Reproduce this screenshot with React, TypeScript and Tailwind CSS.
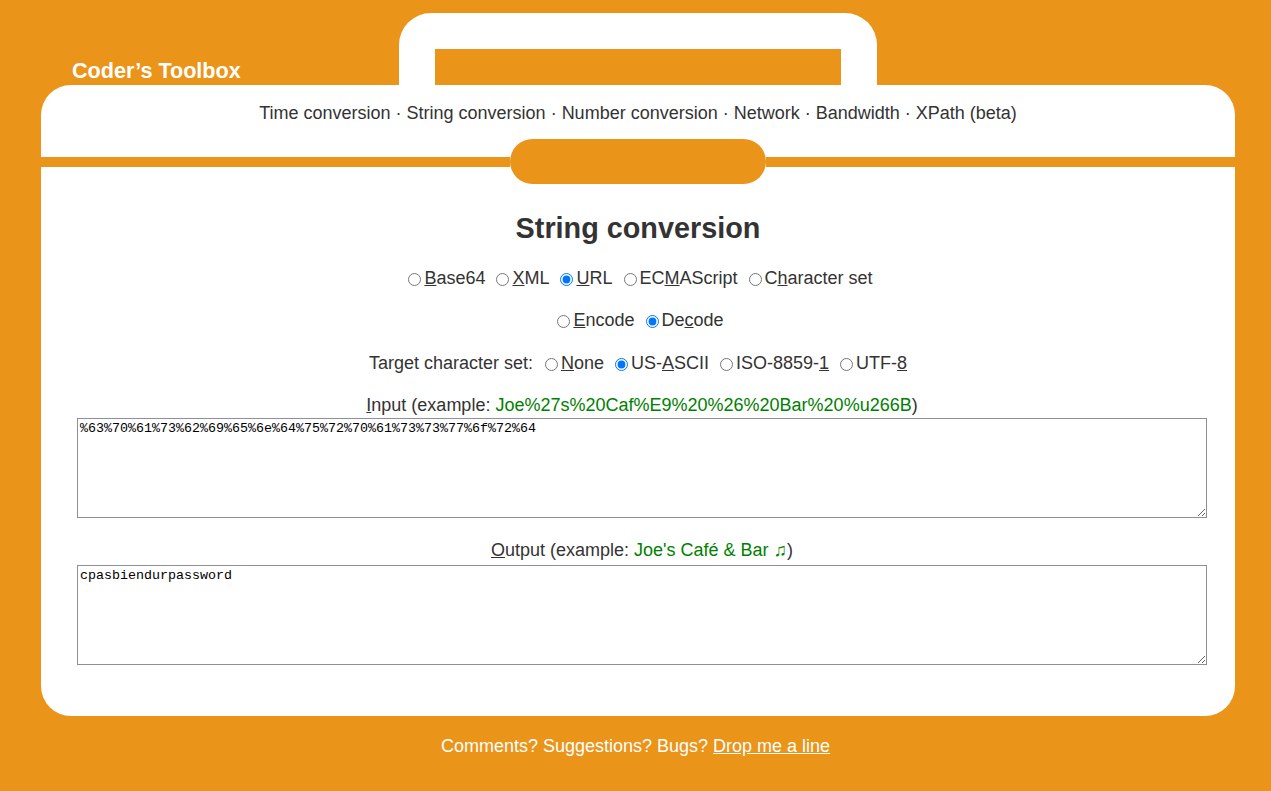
import { Fragment } from "react";

const ORANGE = "bg-[#ea9419]";

type Opt = { pre: string; key: string; post: string; checked?: boolean };

const Radio = ({ name, opt }: { name: string; opt: Opt }) => (
  <label className="inline-flex items-baseline">
    <input
      type="radio"
      name={name}
      defaultChecked={opt.checked}
      className="ml-[5px] mr-[3px] h-[13px] w-[13px] self-center translate-y-[1px]"
    />
    <span>
      {opt.pre}
      <u>{opt.key}</u>
      {opt.post}
    </span>
  </label>
);

const RadioRow = ({ name, opts, label }: { name: string; opts: Opt[]; label?: string }) => (
  <div className="flex justify-center items-center gap-[6px] h-[21px] leading-[21px]">
    {label && <span className="mr-[1px]">{label}</span>}
    {opts.map((o, i) => (
      <Radio key={i} name={name} opt={o} />
    ))}
  </div>
);

const nav = ["Time conversion", "String conversion", "Number conversion", "Network", "Bandwidth", "XPath (beta)"];

export default function App() {
  return (
    <div className={`min-h-screen ${ORANGE} text-[18px] text-[#333] pb-[30px]`} style={{ fontFamily: '"Liberation Sans", Arial, sans-serif' }}>
      {/* top: title + handle */}
      <div className="ml-[41px] mr-[36px] h-[85px] grid grid-cols-[1fr_478px_1fr] items-end">
        <div className="pl-[31px] pb-[2px] text-white font-bold text-[21.6px] leading-[25px]">Coder’s Toolbox</div>
        <div className="h-[72px] bg-white rounded-t-[32px] pt-[36px] px-[36px]">
          <div className={`h-full ${ORANGE}`} />
        </div>
        <div />
      </div>

      {/* card */}
      <div className="ml-[41px] mr-[36px] bg-white rounded-[30px] pt-[18px] pb-[51px]">
        <div className="text-center leading-[21px]">
          {nav.map((n, i) => (
            <Fragment key={n}>
              {i > 0 && " · "}
              <a className="text-[#333]">{n}</a>
            </Fragment>
          ))}
        </div>

        <div className="mt-[15px] flex items-center h-[45px]">
          <div className={`flex-1 h-[10px] ${ORANGE}`} />
          <div className={`w-[256px] h-[45px] rounded-[23px] ${ORANGE}`} />
          <div className={`flex-1 h-[10px] ${ORANGE}`} />
        </div>

        <h1 className="mt-[28px] text-center font-bold text-[28.8px] leading-[32px]">String conversion</h1>

        <div className="mt-[24px]">
          <RadioRow
            name="kind"
            opts={[
              { pre: "", key: "B", post: "ase64" },
              { pre: "", key: "X", post: "ML" },
              { pre: "", key: "U", post: "RL", checked: true },
              { pre: "EC", key: "M", post: "AScript" },
              { pre: "C", key: "h", post: "aracter set" },
            ]}
          />
        </div>
        <div className="mt-[21px]">
          <RadioRow
            name="dir"
            opts={[
              { pre: "", key: "E", post: "ncode" },
              { pre: "De", key: "c", post: "ode", checked: true },
            ]}
          />
        </div>
        <div className="mt-[22px]">
          <RadioRow
            name="cs"
            label="Target character set:"
            opts={[
              { pre: "", key: "N", post: "one" },
              { pre: "US-", key: "A", post: "SCII", checked: true },
              { pre: "ISO-8859-", key: "1", post: "" },
              { pre: "UTF-", key: "8", post: "" },
            ]}
          />
        </div>

        <div className="pl-[36px] pr-[28px]">
          <div className="mt-[21px] text-center leading-[21px]">
            <u>I</u>nput (example: <span className="text-[#008000]">Joe%27s%20Caf%E9%20%26%20Bar%20%u266B</span>)
          </div>
          <textarea
            className="mt-[2px] block w-full h-[100px] border border-[#8f8c9c] px-[2px] py-[2px] text-[13.33px] leading-[15px] text-black"
            style={{ fontFamily: '"Liberation Mono", "Courier New", monospace' }}
            defaultValue="%63%70%61%73%62%69%65%6e%64%75%72%70%61%73%73%77%6f%72%64"
          />
          <div className="mt-[22px] text-center leading-[21px]">
            <u>O</u>utput (example: <span className="text-[#008000]">Joe's Café &amp; Bar ♫</span>)
          </div>
          <textarea
            className="mt-[4px] block w-full h-[100px] border border-[#8f8c9c] px-[2px] py-[2px] text-[13.33px] leading-[15px] text-black"
            style={{ fontFamily: '"Liberation Mono", "Courier New", monospace' }}
            defaultValue="cpasbiendurpassword"
          />
        </div>
      </div>

      <div className="mt-[20px] text-center text-white leading-[21px]">
        Comments? Suggestions? Bugs? <a className="underline text-white">Drop me a line</a>
      </div>
    </div>
  );
}
